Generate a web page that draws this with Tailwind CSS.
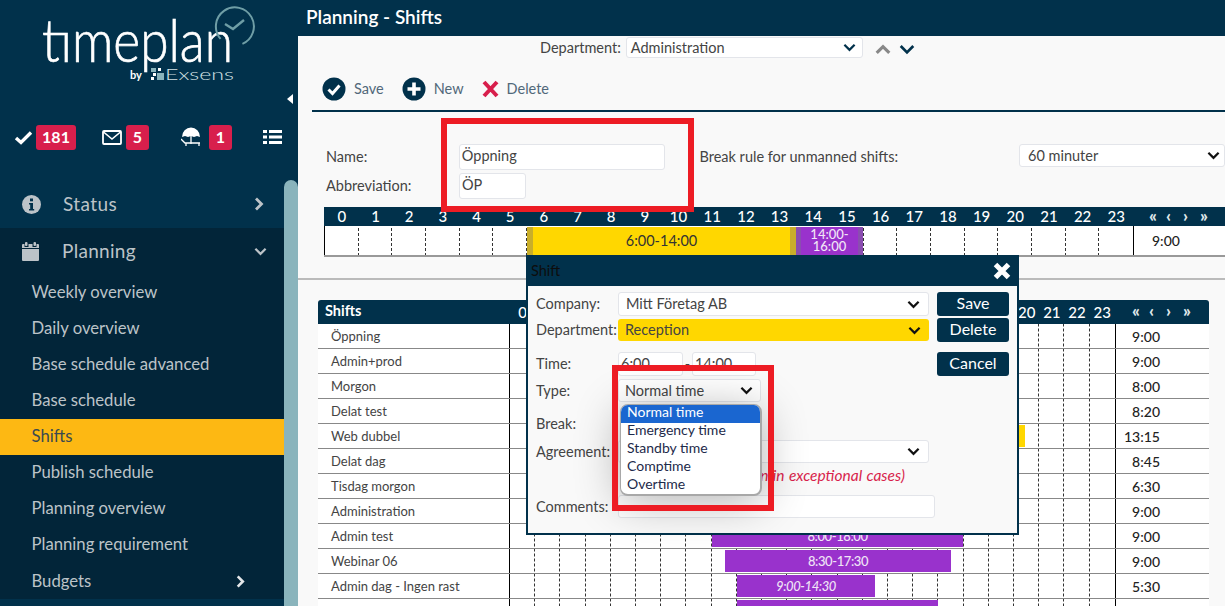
<!DOCTYPE html>
<html lang="en">
<head>
<meta charset="utf-8">
<title>Planning - Shifts</title>
<script src="https://cdn.jsdelivr.net/npm/@tailwindcss/browser@4"></script>
</head>
<body class="relative flex w-[1225px] h-[606px] overflow-hidden bg-[#f9f9f9] font-['Lato','Liberation_Sans',sans-serif] text-[#444]">
<svg class="hidden" aria-hidden="true">
  <symbol id="chev" viewBox="0 0 14 9"><path d="M1.500 1.500 7 7l5.500-5.500" fill="none" stroke="currentColor" stroke-width="2.400"/></symbol>
  <symbol id="chev-r" viewBox="0 0 9 14"><path d="M1.500 1.500 7 7l-5.500 5.500" fill="none" stroke="currentColor" stroke-width="2.800"/></symbol>
</svg>

<!-- Sidebar -->
<aside class="relative w-[298px] h-full shrink-0 bg-[#01314b] text-[#bcc3c8]">
  <div class="relative h-[120px]">
    <svg class="absolute left-0 top-0" width="284" height="100" viewBox="0 0 284 100">
      <text x="42" y="62" font-family="Lato" font-size="59" font-weight="300" fill="#fff" stroke="#fff" stroke-width="0.7" textLength="191" lengthAdjust="spacingAndGlyphs">tımeplan</text>
      <path d="M219 37A19 19 0 1 1 240 45" transform="rotate(-8 233 27)" fill="none" stroke="#6f9ea6" stroke-width="2"/>
      <path d="M225 24l8 5 11-9" fill="none" stroke="#6f9ea6" stroke-width="2.400"/>
      <text x="130" y="79" font-family="Lato" font-size="11" font-weight="700" fill="#fff">by</text>
      <g fill="#8ab4bc"><rect x="157" y="73" width="7" height="7"/><rect x="151" y="68" width="5" height="4"/></g>
      <g fill="#fff"><rect x="158" y="68" width="3" height="3"/><rect x="153" y="73" width="3" height="3"/><rect x="151" y="77" width="3" height="3"/></g>
      <text x="165" y="80" font-family="Lato" font-size="16" font-weight="300" fill="#d5e2e5" textLength="69" lengthAdjust="spacingAndGlyphs">Exsens</text>
    </svg>
    <div class="absolute left-[287px] top-[94px] w-0 h-0 border-y-[5px] border-y-transparent border-r-[6px] border-r-white"></div>
  </div>
  <div class="flex items-center h-[34px] w-[284px] text-white">
    <svg class="ml-[14px] w-[19px] h-[15px]" viewBox="0 0 19 15"><path d="M2 8l5 4.500L17 2.500" fill="none" stroke="#fff" stroke-width="3.400"/></svg>
    <span class="ml-[3px] w-10 h-[25px] rounded-[3px] bg-[#d81f4c] text-center font-bold text-[16px] leading-[23px]">181</span>
    <svg class="ml-[26px] w-5 h-[15px]" viewBox="0 0 20 15"><rect x="1" y="1" width="18" height="13" rx="1" fill="none" stroke="#fff" stroke-width="1.800"/><path d="M1.500 2 10 9l8.500-7" fill="none" stroke="#fff" stroke-width="1.600"/></svg>
    <span class="ml-1 w-[23px] h-[25px] rounded-[3px] bg-[#d81f4c] text-center font-bold text-[16px] leading-[23px]">5</span>
    <svg class="ml-8 w-5 h-[20px]" viewBox="0 0 20 20"><path d="M1 10a9 9.500 0 0 1 18 0l-3-1-3 1-3-1-3 1-3-1z" fill="#fff"/><path d="M10 8v9M0 12l4 4h15M5 16v3M18 16v3" stroke="#fff" stroke-width="1.300" fill="none"/></svg>
    <span class="ml-2 w-[23px] h-[25px] rounded-[3px] bg-[#d81f4c] text-center font-bold text-[16px] leading-[23px]">1</span>
    <svg class="ml-[31px] w-[19px] h-[14px]" viewBox="0 0 19 14" fill="#fff"><rect width="4" height="3"/><rect x="6" width="13" height="3"/><rect y="5.500" width="4" height="3"/><rect x="6" y="5.500" width="13" height="3"/><rect y="11" width="4" height="3"/><rect x="6" y="11" width="13" height="3"/></svg>
  </div>
  <nav class="mt-[26px] w-[284px]">
    <a class="flex items-center h-[48px] text-[19px] tracking-[0.4px]">
      <svg class="ml-[22px] w-[19px] h-[19px]" viewBox="0 0 19 19"><circle cx="9.500" cy="9.500" r="9.500" fill="#bcc3c8"/><rect x="8" y="3.500" width="3" height="2.800" fill="#01314b"/><path d="M7 8h4v6h1.200v1.500H7V14h1.200V9.500H7z" fill="#01314b"/></svg>
      <span class="ml-[22px] flex-1">Status</span>
      <svg class="mr-[20px] w-[10px] h-[14px]"><use href="#chev-r"/></svg>
    </a>
    <div class="bg-[#022539]">
      <a class="flex items-center h-[47px] text-[19px] tracking-[0.3px]">
        <svg class="ml-[22px] w-[17px] h-[19px]" viewBox="0 0 17 19" fill="#bcc3c8"><rect x="3" width="2.500" height="4" rx="1"/><rect x="11.500" width="2.500" height="4" rx="1"/><path d="M1 2h1.500v3h4V2h4v3h4V2H16a1 1 0 0 1 1 1v3H0V3a1 1 0 0 1 1-1zM0 7h17v11a1 1 0 0 1-1 1H1a1 1 0 0 1-1-1z"/></svg>
        <span class="ml-[23px] flex-1">Planning</span>
        <svg class="mr-[17px] w-[13px] h-[9px]"><use href="#chev"/></svg>
      </a>
      <ul class="text-[16.7px] leading-[35px]">
        <li class="h-9 pl-[31.500px]">Weekly overview</li>
        <li class="h-9 pl-[31.500px]">Daily overview</li>
        <li class="h-9 pl-[31.500px]">Base schedule advanced</li>
        <li class="h-9 pl-[31.500px]">Base schedule</li>
        <li class="h-9 pl-[31.500px] bg-[#fdb813] text-[#3a4a50]">Shifts</li>
        <li class="h-9 pl-[31.500px]">Publish schedule</li>
        <li class="h-9 pl-[31.500px]">Planning overview</li>
        <li class="h-9 pl-[31.500px]">Planning requirement</li>
        <li class="flex items-center h-9 pl-[31.500px]"><span class="flex-1">Budgets</span><svg class="mr-[39px] w-[9px] h-[13px] text-[#e4e7e9]"><use href="#chev-r"/></svg></li>
      </ul>
    </div>
  </nav>
  <div class="absolute left-[284px] top-[180px] bottom-0 w-[14px] rounded-t-[7px] bg-[#8ab4bc]"></div>
</aside>

<!-- Main -->
<main class="flex-1 min-w-0 flex flex-col">
  <header class="h-9 shrink-0 pl-2 bg-[#01314b] text-white text-[19px] font-semibold leading-[33px]">Planning - Shifts</header>
  <div class="mt-px shrink-0 flex items-center h-[21px] pl-[242px] text-[14.5px]">
    <span>Department:</span>
    <div class="ml-[5px] flex items-center w-[237px] h-[21px] pl-[4px] pr-[6px] bg-white border border-[#e3e5ea] rounded-[3px]">
      <span class="flex-1">Administration</span>
      <svg class="w-[13px] h-[9px] text-[#01314b]"><use href="#chev"/></svg>
    </div>
    <svg class="ml-[12px] mt-1 w-[16px] h-[11px] text-[#888]" viewBox="0 0 14 9"><path d="M1.500 7.500 7 2l5.500 5.500" fill="none" stroke="currentColor" stroke-width="2.800"/></svg>
    <svg class="ml-[8px] mt-1 w-[16px] h-[11px] text-[#01314b]"><use href="#chev"/></svg>
  </div>
  <div class="mt-[19px] shrink-0 flex items-center h-[24px] pl-[24px] text-[14.5px] text-[#51687a]">
    <svg class="w-6 h-6" viewBox="0 0 24 24"><circle cx="12" cy="12" r="11.500" fill="#01314b"/><path d="M6.500 12.500l4 4 7-8" fill="none" stroke="#fff" stroke-width="3"/></svg>
    <span class="ml-2">Save</span>
    <svg class="ml-[18px] w-6 h-6" viewBox="0 0 24 24"><circle cx="12" cy="12" r="11.500" fill="#01314b"/><path d="M12 5.500v13M5.500 12h13" stroke="#fff" stroke-width="3.600"/></svg>
    <span class="ml-2">New</span>
    <svg class="ml-[18px] w-[17px] h-[18px]" viewBox="0 0 17 18"><path d="M2 2l13 14M15 2 2 16" stroke="#d81f4c" stroke-width="4"/></svg>
    <span class="ml-[8px]">Delete</span>
  </div>
  <div class="mt-[9px] shrink-0 ml-[14px] h-[2px] bg-[#01314b]"></div>

  <form class="mt-[32px] shrink-0 pl-[28px] text-[14.5px] h-[55px] relative">
    <div class="flex items-center h-[26px]">
      <label class="w-[133px]">Name:</label>
      <div class="w-[207px] h-[26px] pl-[2px] bg-white border border-[#e3e5ea] rounded-[3px] leading-[22px]">Öppning</div>
      <label class="ml-[34px] w-[320px]">Break rule for unmanned shifts:</label>
      <div class="flex items-center w-[206px] h-[23px] -mt-[3px] pl-2 pr-1 shrink-0 bg-white border border-[#e3e5ea] rounded-[3px]"><span class="flex-1">60 minuter</span><svg class="w-[13px] h-[9px] text-[#111]"><use href="#chev"/></svg></div>
    </div>
    <div class="flex items-center h-[26px] mt-[3px]">
      <label class="w-[133px]">Abbreviation:</label>
      <div class="w-[67px] h-[26px] pl-[2px] bg-white border border-[#e3e5ea] rounded-[3px] leading-[22px]">ÖP</div>
    </div>
  </form>

  <section class="mt-[8px] ml-[26px] w-[910px] shrink-0">
    <div class="flex h-[19px] bg-[#01314b] text-white text-[15px] font-medium leading-[19px] pl-px">
      <div id="h1" class="flex w-[808px]"></div>
      <div class="flex gap-[7px] pl-[16px] font-black text-[17px] leading-[18px] text-[#dfe7ea]"><span class="w-[10px]">«</span><span class="w-[10px]">‹</span><span class="w-[10px]">›</span><span class="w-[10px]">»</span></div>
    </div>
    <div class="flex h-[31px] border-b-2 border-[#999]">
      <div class="relative flex w-[809px] border-l border-black bg-white" id="r1">
        <div class="absolute z-[1] left-[202px] top-px bottom-0 w-[269px] border-x-[6px] border-[#c9ae2a] bg-[#ffd700] text-[14.5px] text-center leading-[28px] text-[#333]">6:00-14:00</div>
        <div class="absolute z-[1] left-[471px] top-px bottom-0 w-[67px] border-x-[5px] border-[#8a4db0] bg-[#9932cc] text-[13px] font-medium text-center leading-[12px] pt-[1px] text-[#f2e6f7]">14:00-<br>16:00</div>
      </div>
      <div class="w-[101px] border-l border-black bg-white pl-[18px] text-[14px] font-medium leading-[30px] text-[#222]">9:00</div>
    </div>
  </section>

  <div class="mt-[21px] h-[2px] shrink-0 bg-[#bbb]"></div>

  <section class="mt-[20px] ml-[20px] w-[891px] shrink-0">
    <div class="flex h-[24px] rounded-t-[3px] bg-[#01314b] text-white leading-[24px]">
      <div class="w-[192px] pl-[7px] text-[14.5px] font-bold leading-[22px]">Shifts</div>
      <div id="h2" class="flex w-[605px] text-[15px] font-medium"></div>
      <div class="flex gap-[7px] pl-[17px] font-black text-[17px] leading-[22px] text-[#dfe7ea]"><span class="w-[10px]">«</span><span class="w-[10px]">‹</span><span class="w-[10px]">›</span><span class="w-[10px]">»</span></div>
    </div>
    <div id="rows"></div>
  </section>
</main>

<!-- Shift dialog -->
<div role="dialog" class="absolute z-10 left-[526px] top-[255px] w-[493px] h-[280px] border-x-2 border-b-2 border-[#01314b] bg-[#f9f9f9] text-[14.5px] text-[#444]">
  <div class="flex items-center justify-between h-[31px] -mx-[2px] pl-[5px] pr-[8px] bg-[#01314b] text-[#0d0d0d]">
    <span>Shift</span>
    <svg class="w-[18px] h-[18px]" viewBox="0 0 18 18"><path d="M2.500 2.500l13 13M15.500 2.500l-13 13" stroke="#fff" stroke-width="5"/></svg>
  </div>
  <div class="relative flex pl-2">
    <div class="w-[401px]">
      <div class="flex items-center mt-[6px] h-[24px]"><span class="w-[82px]">Company:</span><div class="flex items-center w-[311px] h-[24px] pl-[7px] pr-[8px] bg-white border border-[#e3e5ea] rounded-[3px]"><span class="flex-1">Mitt Företag AB</span><svg class="w-[13px] h-[9px] text-[#111]"><use href="#chev"/></svg></div></div>
      <div class="flex items-center mt-[3px] h-[22px]"><span class="w-[82px]">Department:</span><div class="flex items-center w-[311px] h-[22px] pl-[7px] pr-[8px] bg-[#ffd700] rounded-[3px]"><span class="flex-1">Reception</span><svg class="w-[13px] h-[9px] text-[#111]"><use href="#chev"/></svg></div></div>
      <div class="flex items-center mt-[11px] h-[24px]"><span class="w-[82px]">Time:</span><div class="w-[65px] h-[24px] pl-[2px] bg-white border border-[#e3e5ea] rounded-[3px]">6:00</div><span class="w-[9px] text-center">-</span><div class="w-[64px] h-[24px] pl-[2px] bg-white border border-[#e3e5ea] rounded-[3px]">14:00</div></div>
      <div class="flex items-center mt-[3px] h-[23px]"><span class="w-[82px]">Type:</span><div class="flex items-center w-[143px] h-[23px] pl-[6px] pr-[7px] bg-white border border-[#e3e5ea] rounded-[3px]"><span class="flex-1">Normal time</span><svg class="w-[13px] h-[9px] text-[#111]"><use href="#chev"/></svg></div></div>
      <div class="flex items-center mt-[11px] h-[22px]"><span class="w-[82px]">Break:</span></div>
      <div class="flex items-center mt-[5px] h-[23px]"><span class="w-[82px]">Agreement:</span><div class="flex items-center justify-end w-[311px] h-[23px] pr-[8px] bg-white border border-[#e3e5ea] rounded-[3px]"><svg class="w-[13px] h-[9px] text-[#111]"><use href="#chev"/></svg></div></div>
      <div class="mt-[3px] ml-[84px] h-[18px] text-[15.5px] leading-[18px] italic [word-spacing:0.7px] text-[#d81f4c] whitespace-nowrap">(Should only be chosen in exceptional cases)</div>
      <div class="flex items-center mt-[11px] h-[23px]"><span class="w-[82px]">Comments:</span><div class="w-[317px] h-[23px] bg-white border border-[#e3e5ea] rounded-[3px]"></div></div>
    </div>
    <div class="mt-[6px] w-[72px] text-white text-[16px] text-center">
      <div class="h-[24px] rounded-[3px] bg-[#01314b] leading-[21px]">Save</div>
      <div class="mt-[2px] h-[24px] rounded-[3px] bg-[#01314b] leading-[21px]">Delete</div>
      <div class="mt-[10px] h-[24px] rounded-[3px] bg-[#01314b] leading-[22px]">Cancel</div>
    </div>
    <ul class="absolute left-[92px] top-[118px] w-[142px] h-[92px] overflow-hidden rounded-[8px] border-l border-t border-b-2 border-r-2 border-[#a8a8a8] bg-white text-[14px] leading-[14px] text-[#1d2a4a] shadow-[0_6px_45px_rgba(0,0,0,0.3)]">
      <li class="h-[18px] pl-[6px] bg-[#1a66d0] text-white">Normal time</li>
      <li class="h-[18px] pl-[6px]">Emergency time</li>
      <li class="h-[18px] pl-[6px]">Standby time</li>
      <li class="h-[18px] pl-[6px]">Comptime</li>
      <li class="h-[18px] pl-[6px]">Overtime</li>
    </ul>
  </div>
</div>

<!-- Red annotation frames -->
<div class="absolute z-20 left-[441px] top-[118px] w-[253px] h-[94px] border-[6px] border-[#ed1c24]"></div>
<div class="absolute z-20 left-[612px] top-[365px] w-[162px] h-[146px] border-[6px] border-[#ed1c24]"></div>

<script>
  var DASH = 'flex-1 bg-[linear-gradient(#333_60%,transparent_60%)] bg-[length:1px_5px] bg-repeat-y bg-right';
  var hour1 = document.getElementById('h1'), hour2 = document.getElementById('h2'), r1 = document.getElementById('r1');
  function cell(i) { var c = document.createElement('div'); c.className = i < 23 ? DASH : 'flex-1'; return c; }
  for (var i = 0; i < 24; i++) {
    var a = document.createElement('span'); a.className = 'flex-1 text-center'; a.textContent = i; hour1.appendChild(a);
    var b = document.createElement('span'); b.className = 'flex-1 text-center'; b.textContent = i; hour2.appendChild(b);
    r1.appendChild(cell(i));
  }
  var data = [
    ['Öppning','9:00'],['Admin+prod','9:00'],['Morgon','8:00'],['Delat test','8:20'],
    ['Web dubbel','13:15',[480,35,'bg-[#ffd700]','','']],['Delat dag','8:45'],['Tisdag morgon','6:30'],['Administration','9:00'],
    ['Admin test','9:00',[202,251,'bg-[#9932cc]','8:00-18:00','']],
    ['Webinar 06','9:00',[215,226,'bg-[#9932cc]','8:30-17:30','']],
    ['Admin dag - Ingen rast','5:30',[227,138,'bg-[#9932cc]','9:00-14:30','italic']],
    ['','',[227,201,'bg-[#9932cc]','','']]
  ];
  var host = document.getElementById('rows');
  data.forEach(function (d) {
    var row = document.createElement('div');
    row.className = 'flex h-[25px] border-b border-[#888] bg-white';
    var n = document.createElement('div'); n.className = 'w-[192px] pl-[13px] text-[13px] leading-[24px] text-[#444] border-r border-black'; n.textContent = d[0]; row.appendChild(n);
    var g = document.createElement('div'); g.className = 'relative flex w-[605px]';
    for (var i = 0; i < 24; i++) g.appendChild(cell(i));
    if (d[2]) {
      var s = document.createElement('div');
      s.className = 'absolute top-px bottom-px text-center text-[13px] font-medium tracking-[-0.4px] leading-[22px] text-[#f0e4f6] ' + d[2][2] + ' ' + d[2][4];
      s.style.left = d[2][0] + 'px'; s.style.width = d[2][1] + 'px'; s.textContent = d[2][3];
      g.appendChild(s);
    }
    row.appendChild(g);
    var t = document.createElement('div'); t.className = 'w-[45px] text-right text-[14px] font-medium leading-[26px] text-[#222] border-l border-black'; t.textContent = d[1]; row.appendChild(t);
    var e = document.createElement('div'); e.className = 'w-[49px]'; row.appendChild(e);
    host.appendChild(row);
  });
</script>
</body>
</html>
